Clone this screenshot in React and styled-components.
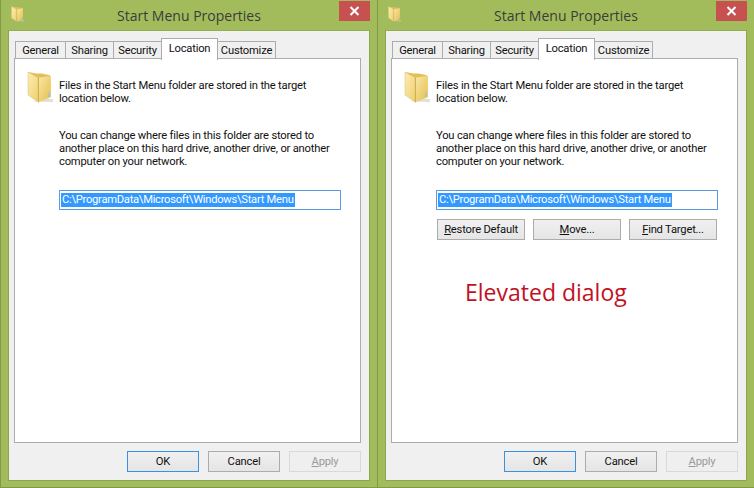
import React from 'react';
import styled, { createGlobalStyle } from 'styled-components';

const uiFont = `Roboto, "Liberation Sans", Arial, sans-serif`;

const GlobalStyle = createGlobalStyle`
  html, body {
    margin: 0;
    padding: 0;
    background: #a2bc5c;
  }
  body {
    font-family: "Open Sans", "Liberation Sans", sans-serif;
  }
`;

const Desktop = styled.div`
  display: flex;
  width: 754px;
  height: 488px;
  overflow: hidden;
`;

const Window = styled.div`
  box-sizing: border-box;
  flex: 0 0 377px;
  width: 377px;
  min-width: 0;
  height: 488px;
  display: flex;
  flex-direction: column;
  background: #a2bc5c;
  border-left: 1px solid #7f9a49;
  border-bottom: 1px solid #7f9a49;
  padding: 0 7px 6px 7px;
`;

const TitleBar = styled.div`
  height: 30px;
  flex: none;
  display: flex;
  align-items: flex-start;
  position: relative;
`;

const SmallIcon = styled.div`
  display: flex;
  margin: 6px 0 0 3px;
`;

const Title = styled.div`
  position: absolute;
  left: 0;
  right: 0;
  top: 6px;
  text-align: center;
  font-size: 14px;
  line-height: 20px;
  color: #3c3c3c;
`;

const CloseButton = styled.div`
  position: absolute;
  right: 0;
  top: 1px;
  width: 31px;
  height: 20px;
  background: #c75050;
  display: flex;
  align-items: center;
  justify-content: center;
`;

const Client = styled.div`
  flex: 1;
  min-height: 0;
  min-width: 0;
  box-sizing: border-box;
  display: flex;
  flex-direction: column;
  background: #f0f0f0;
  border: 1px solid #8ba64f;
  border-top-color: #94ae54;
  padding: 7px 8px 0 5px;
`;

const TabStrip = styled.div`
  display: flex;
  align-items: flex-end;
  height: 21px;
  flex: none;
  padding-left: 1px;
  position: relative;
  z-index: 1;
`;

const Tab = styled.div`
  box-sizing: border-box;
  width: ${(p) => p.$w}px;
  height: ${(p) => (p.$active ? 22 : 18)}px;
  margin-bottom: ${(p) => (p.$active ? -1 : 0)}px;
  margin-right: ${(p) => (p.$last ? 0 : -1)}px;
  border: 1px solid #acacac;
  border-bottom: ${(p) => (p.$active ? 'none' : '1px solid #acacac')};
  background: ${(p) => (p.$active ? '#fff' : '#f0f0f0')};
  position: relative;
  z-index: ${(p) => (p.$active ? 1 : 0)};
  display: flex;
  align-items: center;
  justify-content: center;
  font-family: ${uiFont};
  font-size: 11.2px;
  letter-spacing: -0.2px;
  color: #111;
  padding: ${(p) => (p.$active ? '0 0 2px' : '1px 0 0')};
`;

const TabPage = styled.div`
  box-sizing: border-box;
  height: 385px;
  flex: none;
  margin-top: -1px;
  background: #fff;
  border: 1px solid #acacac;
  display: flex;
  flex-direction: column;
  padding: 12px 19px 0 12px;
`;

const InfoRow = styled.div`
  display: flex;
  gap: 6px;
`;

const Copy = styled.div`
  font-family: ${uiFont};
  font-size: 11.2px;
  letter-spacing: -0.2px;
  line-height: 13px;
  color: #111;
  padding-top: 8px;
  white-space: nowrap;
`;

const Paragraph = styled(Copy)`
  padding: 0;
  margin: 24px 0 0 32px;
`;

const PathBox = styled.div`
  box-sizing: border-box;
  height: 20px;
  margin: 22px 0 0 32px;
  border: 1px solid #569de5;
  background: #fff;
  display: flex;
  align-items: center;
  padding-left: 1px;
  flex: none;
`;

const Selected = styled.span`
  background: #3399ff;
  color: #fff;
  font-family: ${uiFont};
  font-size: 11.2px;
  letter-spacing: -0.27px;
  line-height: 14px;
  padding: 0 1px;
  box-sizing: border-box;
  white-space: nowrap;
`;

const ActionRow = styled.div`
  display: flex;
  justify-content: space-between;
  margin: 9px 1px 0 33px;
`;

const Button = styled.div`
  box-sizing: border-box;
  width: ${(p) => p.$w || 72}px;
  height: ${(p) => p.$h || 21}px;
  display: flex;
  align-items: center;
  justify-content: center;
  border: 1px solid ${(p) => (p.$primary ? '#3c90e4' : p.$disabled ? '#d9d9d9' : '#acacac')};
  background: ${(p) => (p.$disabled ? '#efefef' : 'linear-gradient(#f0f0f0, #e5e5e5)')};
  color: ${(p) => (p.$disabled ? '#9a9a9a' : '#111')};
  font-family: ${uiFont};
  font-size: 11.2px;
  letter-spacing: -0.2px;
  white-space: nowrap;
  u {
    text-underline-offset: 1px;
  }
`;

const Footer = styled.div`
  display: flex;
  justify-content: flex-end;
  gap: 9px;
  margin-top: 8px;
`;

const Note = styled.div`
  margin: 37px 0 0 61px;
  font-size: 23px;
  line-height: 30px;
  color: #c1121f;
  font-family: "Open Sans", sans-serif;
`;

function Folder({ size }) {
  return (
    <svg width={size} height={size * 1.24} viewBox="0 0 25 31" fill="none">
      <defs>
        <linearGradient id="folderFront" x1="0" y1="0" x2="1" y2="1">
          <stop offset="0" stopColor="#fbeeb0" />
          <stop offset="1" stopColor="#efcf70" />
        </linearGradient>
        <linearGradient id="folderLeaf" x1="0" y1="0" x2="1" y2="1">
          <stop offset="0" stopColor="#f8e9a6" />
          <stop offset="1" stopColor="#e6bd4e" />
        </linearGradient>
      </defs>
      <path d="M6 29 L25 30 L25 27 L14 26 Z" fill="#cfcdbb" opacity="0.6" />
      <path d="M1 1 L9 2.5 L14 2.5 L22 4 L22 8 L11 10 Z" fill="#e2bd58" />
      <path d="M11 6.5 L23 4.5 L23 25 L11 30 Z" fill="url(#folderLeaf)" />
      <path d="M1 1 L11 6.5 L11 30 L1 23 Z" fill="url(#folderFront)" stroke="#dcc070" strokeWidth="0.5" />
      <path d="M11 6.5 L11 30" stroke="#c9a444" strokeWidth="0.8" />
      <rect x="20.5" y="21" width="1.5" height="4" fill="#9cc6d8" />
    </svg>
  );
}

function CloseGlyph() {
  return (
    <svg width="11" height="10" viewBox="0 0 11 10">
      <path d="M1.5 1 L9.5 9 M9.5 1 L1.5 9" stroke="#fff" strokeWidth="2" />
    </svg>
  );
}

const tabs = [
  { label: 'General', w: 51 },
  { label: 'Sharing', w: 49 },
  { label: 'Security', w: 49 },
  { label: 'Location', w: 57, active: true },
  { label: 'Customize', w: 59, last: true },
];

function PropertiesWindow({ elevated }) {
  return (
    <Window>
      <TitleBar>
        <SmallIcon>
          <Folder size={13} />
        </SmallIcon>
        <Title>Start Menu Properties</Title>
        <CloseButton>
          <CloseGlyph />
        </CloseButton>
      </TitleBar>
      <Client>
        <TabStrip>
          {tabs.map((t) => (
            <Tab key={t.label} $w={t.w} $active={t.active} $last={t.last}>
              {t.label}
            </Tab>
          ))}
        </TabStrip>
        <TabPage>
          <InfoRow>
            <Folder size={26} />
            <Copy>
              Files in the Start Menu folder are stored in the target
              <br />
              location below.
            </Copy>
          </InfoRow>
          <Paragraph>
            You can change where files in this folder are stored to
            <br />
            another place on this hard drive, another drive, or another
            <br />
            computer on your network.
          </Paragraph>
          <PathBox>
            <Selected>C:\ProgramData\Microsoft\Windows\Start Menu</Selected>
          </PathBox>
          {elevated && (
            <>
              <ActionRow>
                <Button $w={88}>
                  <span><u>R</u>estore Default</span>
                </Button>
                <Button $w={88}>
                  <span><u>M</u>ove...</span>
                </Button>
                <Button $w={88}>
                  <span><u>F</u>ind Target...</span>
                </Button>
              </ActionRow>
              <Note>Elevated dialog</Note>
            </>
          )}
        </TabPage>
        <Footer>
          <Button $primary>OK</Button>
          <Button>Cancel</Button>
          <Button $disabled>
            <span><u>A</u>pply</span>
          </Button>
        </Footer>
      </Client>
    </Window>
  );
}

export default function App() {
  return (
    <>
      <GlobalStyle />
      <Desktop>
        <PropertiesWindow />
        <PropertiesWindow elevated />
      </Desktop>
    </>
  );
}
